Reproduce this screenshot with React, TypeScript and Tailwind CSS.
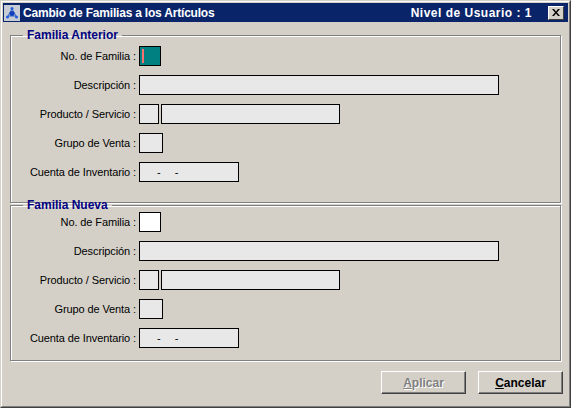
import React from "react";

type FieldProps = { label: string; children: React.ReactNode };

const Row: React.FC<FieldProps> = ({ label, children }) => (
  <div className="flex h-[20px] items-center">
    <span className="w-[126px] pr-[1px] text-right whitespace-nowrap tracking-[-0.1px]">{label}</span>
    <div className="ml-[2px] flex h-full gap-[2px]">{children}</div>
  </div>
);

const Box: React.FC<{ w: string; children?: React.ReactNode; className?: string }> = ({
  w,
  children,
  className,
}) => (
  <div className={`${w} h-full border border-black bg-[#e8e8e8] ${className ?? ""}`}>{children}</div>
);

const Inventory = () => (
  <Box w="w-[100px]">
    <div className="flex h-full items-center pl-[17px] gap-[14px] text-[11px] leading-none">
      <span>-</span>
      <span>-</span>
    </div>
  </Box>
);

const Group: React.FC<{ title: string; active?: boolean; className: string }> = ({
  title,
  active,
  className,
}) => (
  <fieldset
    className={`ml-[7px] w-[551px] border border-[#808080] shadow-[inset_1px_1px_0_#fff,1px_1px_0_#fff] ${className}`}
  >
    <legend className="ml-[12px] px-[4px] font-bold text-[12px] text-[#000080] leading-[13px]">{title}</legend>
    <div className="flex flex-col gap-[9px]">
      <Row label="No. de Familia :">
        {active ? (
          <div className="relative h-full w-[22px] border border-black bg-[#008080]">
            <div className="absolute left-[2px] top-[2px] h-[14px] w-[2px] bg-[#ff7070]" />
          </div>
        ) : (
          <div className="h-full w-[22px] border border-black bg-white" />
        )}
      </Row>
      <Row label="Descripción :">
        <Box w="w-[360px]" />
      </Row>
      <Row label="Producto / Servicio :">
        <Box w="w-[20px]" />
        <Box w="w-[179px]" />
      </Row>
      <Row label="Grupo de Venta :">
        <Box w="w-[24px]" />
      </Row>
      <Row label="Cuenta de Inventario :">
        <Inventory />
      </Row>
    </div>
  </fieldset>
);

const AppIcon = () => (
  <svg width="16" height="16" viewBox="0 0 16 16">
    <rect x="0" y="0" width="16" height="16" fill="#c8ccd4" />
    <path d="M8 4 L4 11 M8 4 L12 11 M4 11 L12 11" stroke="#3060c0" strokeWidth="1" />
    <circle cx="8" cy="8.5" r="2.5" fill="#1040c0" />
    <circle cx="8" cy="3.5" r="1.5" fill="#2060e0" />
    <circle cx="3.5" cy="12" r="1.5" fill="#2060e0" />
    <circle cx="12.5" cy="12" r="1.5" fill="#2060e0" />
  </svg>
);

export default function App() {
  return (
    <div
      className="w-[571px] h-[408px] border border-t-[#d4d0c8] border-l-[#d4d0c8] border-r-[#404040] border-b-[#404040] bg-[#d4d0c8] text-[11px] text-black"
      style={{ fontFamily: '"Liberation Sans", Arial, sans-serif' }}
    >
      <div className="flex h-full flex-col border border-t-white border-l-white border-r-[#808080] border-b-[#808080] p-[1px]">
        {/* Title bar */}
        <div className="flex h-[19px] items-center bg-[#0a246a] pl-[1px] pr-[4px] text-white font-bold text-[12px]">
          <AppIcon />
          <span className="ml-[3px] tracking-[-0.2px]">Cambio de Familias a los Artículos</span>
          <span className="ml-auto tracking-[0.5px]">Nivel de Usuario : 1</span>
          <button className="ml-[16px] flex h-[14px] w-[16px] items-center justify-center border border-t-white border-l-white border-r-[#404040] border-b-[#404040] bg-[#d4d0c8] text-black">
            <svg width="8" height="7" viewBox="0 0 8 7">
              <path d="M0 0h2l2 2.5L6 0h2L5 3.5 8 7H6L4 4.5 2 7H0l3-3.5z" fill="#000" />
            </svg>
          </button>
        </div>

        <Group title="Familia Anterior" active className="mt-[7px] pt-[4px] pb-[20px]" />
        <Group title="Familia Nueva" className="mt-[-4px] pt-0 pb-[12px]" />

        {/* Buttons */}
        <div className="mt-auto mb-[11px] flex justify-end gap-[12px] pr-[5px]">
          <button className="h-[23px] w-[85px] border border-t-white border-l-white border-r-[#404040] border-b-[#404040] bg-[#d4d0c8] shadow-[inset_-1px_-1px_0_#808080] font-bold text-[12px] text-[#808080] [text-shadow:1px_1px_0_#fff]">
            <span className="underline">A</span>plicar
          </button>
          <button className="h-[23px] w-[85px] border border-t-white border-l-white border-r-[#404040] border-b-[#404040] bg-[#d4d0c8] shadow-[inset_-1px_-1px_0_#808080] font-bold text-[12px]">
            <span className="underline">C</span>ancelar
          </button>
        </div>
      </div>
    </div>
  );
}
